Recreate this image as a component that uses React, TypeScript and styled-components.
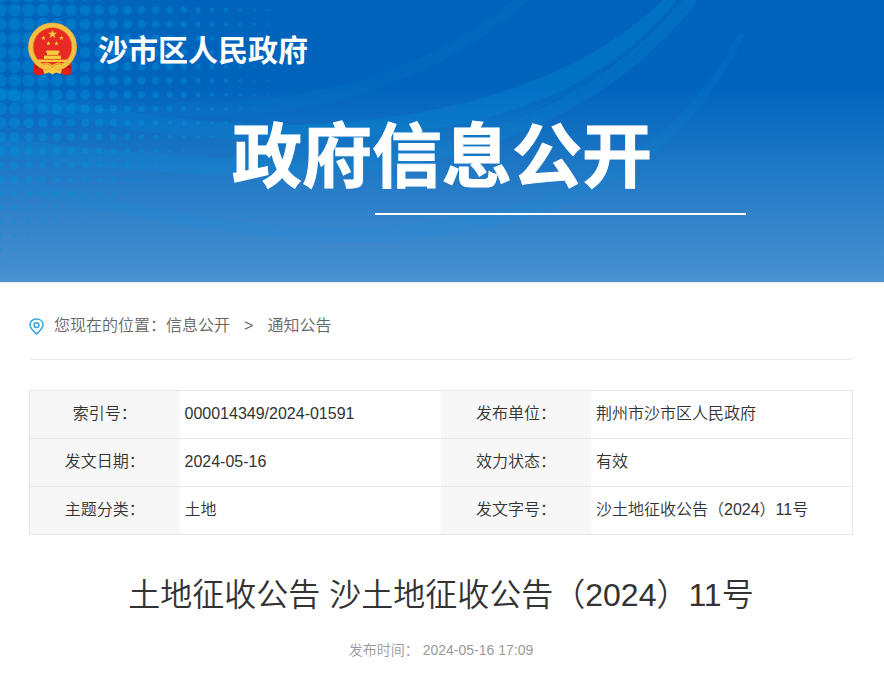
import React from 'react';
import styled, { createGlobalStyle } from 'styled-components';

const GlobalStyle = createGlobalStyle`
  *, *::before, *::after { box-sizing: border-box; }
  body {
    margin: 0;
    background: #fff;
    color: #333;
    font-family: "Liberation Sans", "Noto Sans CJK SC", sans-serif;
    font-size: 16px;
    font-weight: 350;
    line-height: 24px;
  }
  a { color: inherit; text-decoration: none; }
`;

const Banner = styled.header`
  position: relative;
  overflow: hidden;
  padding-bottom: 67px;
  color: #fff;
  font-family: "Noto Sans CJK SC", sans-serif;
  font-weight: 700;
  background: linear-gradient(#0064bc 0, #0064bc 30%, #2e81c9 74%, #4a91d0 100%);
  border-bottom: 1px solid #e8eef4;
`;

const Backdrop = styled.svg`
  position: absolute;
  top: 0;
  left: 0;
  width: 100%;
  height: 100%;
`;

const Brand = styled.a`
  position: relative;
  display: inline-flex;
  align-items: center;
  gap: 20px;
  padding: 22px 28px 0;
`;

const BrandName = styled.span`
  padding-bottom: 2px;
  font-size: 30px;
  line-height: 52px;
`;

const BannerTitle = styled.h1`
  position: relative;
  margin: 29px 0 0;
  font-size: 70px;
  font-weight: 700;
  line-height: 84px;
  text-align: center;
  -webkit-text-stroke: 1px #fff;
`;

const TitleRule = styled.div`
  position: relative;
  width: 42%;
  height: 2px;
  margin: 19px 0 0 42.4%;
  background: #fff;
`;

const Content = styled.main`
  padding: 0 31px 0 29px;
`;

const Breadcrumb = styled.nav`
  display: flex;
  align-items: center;
  padding: 31px 0 21px;
  color: #666;
  border-bottom: 1px solid #e6e6e6;
  border-radius: 4px;
`;

const PinIcon = styled.svg`
  margin-right: 10px;
`;

const Separator = styled.span`
  margin: 0 14px;
`;

const InfoTable = styled.table`
  width: 100%;
  margin-top: 30px;
  table-layout: fixed;
  border-collapse: collapse;
  border: 1px solid #e6e6e6;
`;

const InfoRow = styled.tr`
  border-bottom: 1px solid #e6e6e6;
`;

const Label = styled.th`
  width: 150px;
  height: 48px;
  padding: 0 0 2px;
  font-weight: 350;
  text-align: center;
  background: #f7f7f7;
`;

const Value = styled.td`
  padding: 0 5px 2px;
`;

const Headline = styled.h2`
  margin: 36px 0 0;
  font-size: 32px;
  font-weight: 350;
  line-height: 48px;
  text-align: center;
`;

const Published = styled.p`
  display: flex;
  justify-content: center;
  gap: 4px;
  margin: 19px 0 20px;
  font-size: 14px;
  color: #999;
`;

type Dot = { x: number; y: number; r: number };

const dots: Dot[] = [];
for (let row = 0; row < 20; row += 1) {
  for (let col = 0; col < 22; col += 1) {
    const x = 0.5 + col * 14.1;
    const y = -4 + row * 14.1;
    const across = x / 315;
    const down = Math.max(0, y - 80) / 200;
    const r = 7.4 * (1 - across) * (1 - down) - 2 * across * down;
    if (r > 0.3) dots.push({ x, y, r: Math.min(r, 6.4) });
  }
}

const waves = [
  { d: 'M0 88C70 102 140 104 230 101C340 97 440 60 513 0H529C460 62 360 113 215 116C130 118 60 110 0 98Z', o: 0.1 },
  { d: 'M0 88C90 108 180 122 270 125C420 125 570 90 663 0H677C600 90 500 140 270 140C160 139 70 122 0 98Z', o: 0.2 },
  { d: 'M0 138C130 153 240 162 330 160C470 145 590 110 682 0H698C610 115 480 160 350 174C210 182 100 166 0 158Z', o: 0.2 },
  { d: 'M270 125C420 125 570 90 663 0H677C590 110 470 145 330 160C300 161 280 160 240 158L270 140Z', o: 0.1 },
  { d: 'M0 176C110 194 200 227 345 227C520 222 660 180 739 33Q743 31 744 36C680 176 540 238 370 242C220 242 110 210 0 188Z', o: 0.12 },
];

const star = (cx: number, cy: number, r: number) =>
  Array.from({ length: 10 }, (_, i) => {
    const a = -Math.PI / 2 + (i * Math.PI) / 5;
    const q = i % 2 ? r * 0.4 : r;
    return `${(cx + q * Math.cos(a)).toFixed(2)},${(cy + q * Math.sin(a)).toFixed(2)}`;
  }).join(' ');

const BannerArt = () => (
  <Backdrop viewBox="0 0 884 282" preserveAspectRatio="xMinYMin slice" aria-hidden="true">
    {waves.map((w) => (
      <path key={w.d} d={w.d} fill="#0698dc" opacity={w.o} />
    ))}
    <g fill="#0095dc" opacity="0.42">
      {dots.map((p) => (
        <circle key={`${p.x}-${p.y}`} cx={p.x} cy={p.y} r={p.r} />
      ))}
    </g>
  </Backdrop>
);

const Emblem = () => (
  <svg width="50" height="54" viewBox="0 0 50 54" aria-hidden="true">
    <path d="M6 38L5 49.500Q6 53 10 53H14L18 50H31L36 53H40Q44 53 44 49L43 37Z" fill="#dc1f1a" />
    <path d="M7 46L13 43L16 49M43 46L37 43L33 49" fill="none" stroke="#a90f12" strokeWidth="1.500" />
    <circle cx="24.500" cy="25" r="21.800" fill="#e92a24" stroke="#f3c043" strokeWidth="5" />
    <circle cx="24.500" cy="25" r="23.800" fill="none" stroke="#dda436" strokeWidth="0.800" strokeDasharray="2 1.500" />
    <circle cx="24.500" cy="25" r="19.400" fill="none" stroke="#d58a22" strokeWidth="0.600" />
    <g fill="#f8ca3c">
      <polygon points={star(24.5, 12.2, 4.8)} />
      <polygon points={star(15.5, 16, 2.6)} />
      <polygon points={star(33.5, 16, 2.6)} />
      <polygon points={star(20.5, 21.5, 2.6)} />
      <polygon points={star(28.5, 21.5, 2.6)} />
      <path d="M18 29L19 28.500H30.500L31.500 29V30.500H30.500V33H19V30.500H18Z" />
      <path d="M16 33.500H33V37H16Z" />
      <path d="M10 37.500H39L38 40H11Z" />
      <path d="M14 42Q19 38.500 24.500 43Q30 38.500 35 42L30.500 45.500Q27 44 24.500 46Q22 44 18.500 45.500Z" />
      <path d="M15 48L20 48.500L24.500 46L29 48.500L34 48L32.500 52L28 50.500L24.500 52.500L21 50.500L16.500 52Z" />
    </g>
    <path d="M17 33.300H32M12 37.300H37M15 42.500Q20 40.500 24.500 45Q29 40.500 34 42.500" fill="none" stroke="#d6591f" strokeWidth="0.600" />
  </svg>
);

const records = [
  ['索引号：', '000014349/2024-01591', '发布单位：', '荆州市沙市区人民政府'],
  ['发文日期：', '2024-05-16', '效力状态：', '有效'],
  ['主题分类：', '土地', '发文字号：', '沙土地征收公告（2024）11号'],
];

export default function App() {
  return (
    <>
      <GlobalStyle />
      <Banner lang="zh-CN">
        <BannerArt />
        <Brand href="#">
          <Emblem />
          <BrandName>沙市区人民政府</BrandName>
        </Brand>
        <BannerTitle>政府信息公开</BannerTitle>
        <TitleRule />
      </Banner>
      <Content lang="zh-CN">
        <Breadcrumb aria-label="您现在的位置">
          <PinIcon width="15" height="17" viewBox="0 0 15 17" fill="none" stroke="#35a4de" strokeWidth="1.500" aria-hidden="true">
            <path d="M7.500 16C4.500 13.200 1 10.400 1 6.800C1 3.400 3.800 1 7.500 1C11.200 1 14 3.400 14 6.800C14 10.400 10.500 13.200 7.500 16Z" />
            <circle cx="7.500" cy="7.200" r="2.400" />
          </PinIcon>
          <span>您现在的位置：</span>
          <a href="#info">信息公开</a>
          <Separator>&gt;</Separator>
          <a href="#notice">通知公告</a>
        </Breadcrumb>
        <InfoTable>
          <tbody>
            {records.map(([labelA, valueA, labelB, valueB]) => (
              <InfoRow key={labelA}>
                <Label scope="row">{labelA}</Label>
                <Value>{valueA}</Value>
                <Label scope="row">{labelB}</Label>
                <Value>{valueB}</Value>
              </InfoRow>
            ))}
          </tbody>
        </InfoTable>
        <Headline>土地征收公告 沙土地征收公告（2024）11号</Headline>
        <Published>
          <span>发布时间：</span>
          <time dateTime="2024-05-16T17:09">2024-05-16 17:09</time>
        </Published>
      </Content>
    </>
  );
}
